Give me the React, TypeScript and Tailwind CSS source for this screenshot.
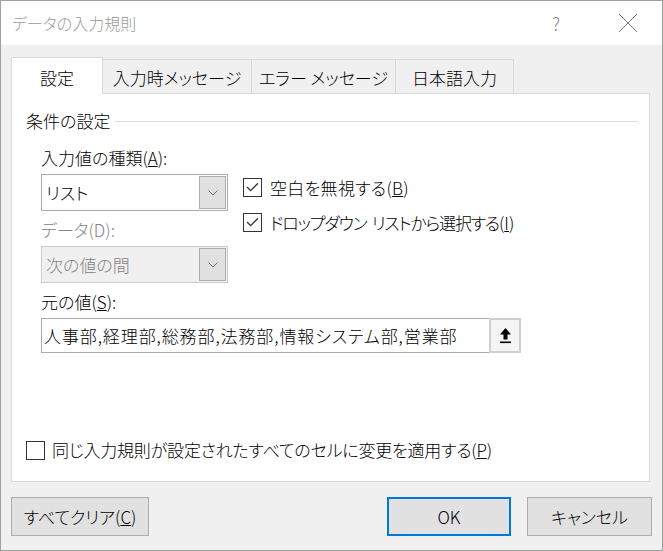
import { Check } from 'lucide-react';

const font = "font-['Noto_Sans_CJK_JP','Noto_Sans',sans-serif] [font-feature-settings:'palt']";

function Checkbox({ checked }: { checked: boolean }) {
  return (
    <span className="w-[19px] h-[19px] shrink-0 border border-[#333] bg-white flex items-center justify-center">
      {checked && <Check className="w-[15px] h-[15px] text-[#333]" strokeWidth={2.2} />}
    </span>
  );
}

function Chevron() {
  return (
    <svg width="10" height="6" viewBox="0 0 10 6">
      <path d="M0.5 0.5 L5 5 L9.5 0.5" stroke="#6a6a6a" strokeWidth="1" fill="none" />
    </svg>
  );
}

function Combo({ value, disabled }: { value: string; disabled?: boolean }) {
  return (
    <div
      className={`h-[37px] w-[187px] border flex items-center p-px ${
        disabled ? 'border-[#cccccc] bg-[#f0f0f0] text-[#838383]' : 'border-[#acacac] bg-white text-black'
      }`}
    >
      <span className="flex-1 pl-[3px] leading-[24px]">{value}</span>
      <span className="w-[27px] h-[33px] border border-[#adadad] bg-[#e1e1e1] flex items-center justify-center">
        <Chevron />
      </span>
    </div>
  );
}

const tabs = ['設定', '入力時メッセージ', 'エラー メッセージ', '日本語入力'];
const tabWidths = ['w-[92px]', 'w-[149px]', 'w-[144px]', 'w-[118px]'];

export default function App() {
  return (
    <div className={`${font} font-light w-[663px] h-[551px] bg-[#f0f0f0] border border-[#a0a0a0] flex flex-col text-[17px] text-black`}>
      {/* Title bar */}
      <div className="h-[44px] bg-white flex items-center pl-[11px] shrink-0">
        <span className="flex-1 text-[16px] text-[#9a9a9a]">データの入力規則</span>
        <span className="w-[20px] text-center text-[18px] text-[#8a8a8a] mr-[52px]">?</span>
        <svg width="20" height="20" viewBox="0 0 20 20" className="mr-[24px]">
          <path d="M1 1 L19 19 M19 1 L1 19" stroke="#7a7a7a" strokeWidth="1" fill="none" />
        </svg>
      </div>

      {/* Tabs + panel */}
      <div className="pl-[10px] pr-[12px] pt-[12px]">
        <div className="flex items-end h-[37px] -mb-px relative z-10">
          {tabs.map((t, i) => (
            <div
              key={t}
              className={`${tabWidths[i]} flex items-center justify-center border-[#d9d9d9] ${
                i === 0
                  ? 'h-[37px] bg-white border-t border-l border-r pt-[3px]'
                  : 'h-[35px] bg-[#f0f0f0] border-t border-r border-b pt-[3px]'
              }`}
            >
              {t}
            </div>
          ))}
        </div>
        <div className="h-[389px] bg-white border border-[#d9d9d9] flex flex-col">
          <div className="flex items-center gap-[5px] pl-[14px] pr-[11px] mt-[15px] leading-[24px]">
            <span>条件の設定</span>
            <span className="flex-1 h-px bg-[#dcdcdc]" />
          </div>

          <div className="pl-[29px] mt-[13px] leading-[24px]">
            <div>
              入力値の種類(<span className="underline">A</span>):
            </div>
            <div className="flex mt-[4px]">
              <div className="flex flex-col">
                <Combo value="リスト" />
                <div className="mt-[7px] text-[#838383]">データ(D):</div>
                <div className="mt-[4px]">
                  <Combo value="次の値の間" disabled />
                </div>
              </div>
              <div className="ml-[15px] pt-[4px] flex flex-col gap-[16px]">
                <label className="flex items-center gap-[8px] h-[19px]">
                  <Checkbox checked />
                  <span className="tracking-[0.3px]">
                    空白を無視する(<span className="underline">B</span>)
                  </span>
                </label>
                <label className="flex items-center gap-[8px] h-[19px]">
                  <Checkbox checked />
                  <span>
                    <span className="tracking-[-1.2px]">ドロップダウン</span>
                    <span className="ml-[5px] tracking-[-1.2px]">リストから選択する</span>
                    (<span className="underline">I</span>)
                  </span>
                </label>
              </div>
            </div>
            <div className="mt-[7px]">
              元の値(<span className="underline">S</span>):
            </div>
            <div className="mt-[4px] w-[480px] h-[35px] border border-[#acacac] flex items-center">
              <span className="flex-1 pl-[2px] tracking-[0.9px]">人事部,経理部,総務部,法務部,情報システム部,営業部</span>
              <button className="w-[32px] h-[35px] -mr-px border-2 border-[#cfcfcf] bg-[#f5f5f5] flex items-center justify-center">
                <svg width="13" height="17" viewBox="0 0 13 17">
                  <path d="M6.5 1 L12 7.5 L8.5 7.5 L8.5 12.5 L4.5 12.5 L4.5 7.5 L1 7.5 Z" fill="#000" />
                  <rect x="1" y="14.5" width="11" height="1.6" fill="#000" />
                </svg>
              </button>
            </div>
          </div>

          <label className="mt-auto mb-[19px] ml-[14px] flex items-center gap-[7px] leading-[24px]">
            <Checkbox checked={false} />
            <span className="tracking-[-0.2px]">
              同じ入力規則が設定されたすべてのセルに変更を適用する(<span className="underline">P</span>)
            </span>
          </label>
        </div>
      </div>

      {/* Buttons */}
      <div className="flex items-center mt-[15px] pl-[10px] pr-[10px]">
        <button className="w-[138px] h-[39px] border border-[#adadad] bg-[#e1e1e1]">
          すべてクリア(<span className="underline">C</span>)
        </button>
        <div className="flex-1" />
        <button className="w-[124px] h-[39px] border-2 border-[#0078d7] bg-[#e1e1e1]">OK</button>
        <button className="w-[125px] h-[39px] ml-[16px] border border-[#adadad] bg-[#e1e1e1]">キャンセル</button>
      </div>
    </div>
  );
}
